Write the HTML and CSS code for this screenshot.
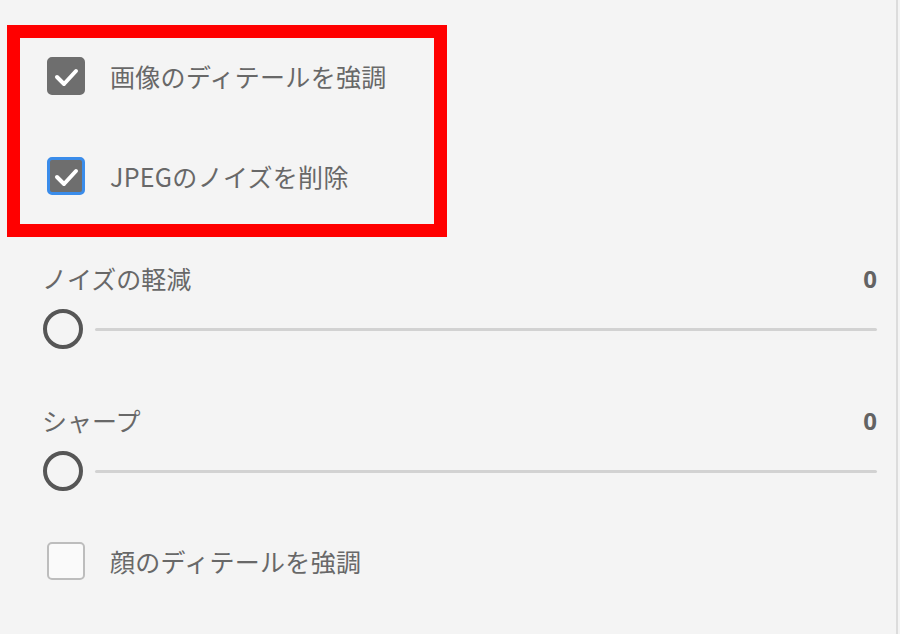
FILE: index.html
```html
<!DOCTYPE html>
<html lang="ja">
<head>
    <meta charset="UTF-8">
    <title>ディテール設定</title>
    <link rel="stylesheet" href="styles.css">
</head>
<body>
    <div class="panel">
        <div class="highlight">
            <label class="check-row">
                <span class="box checked">
                    <svg viewBox="0 0 38 38" width="38" height="38"><path d="M10 20 L17 27 L29 14" fill="none" stroke="#fff" stroke-width="4" stroke-linecap="round" stroke-linejoin="round"/></svg>
                </span>
                <span class="check-text">画像のディテールを強調</span>
            </label>
            <label class="check-row">
                <span class="box checked focused">
                    <svg viewBox="0 0 38 38" width="38" height="38"><path d="M10 20 L17 27 L29 14" fill="none" stroke="#fff" stroke-width="4" stroke-linecap="round" stroke-linejoin="round"/></svg>
                </span>
                <span class="check-text">JPEGのノイズを削除</span>
            </label>
        </div>

        <div class="sliders">
            <div class="slider-group">
                <div class="slider-head">
                    <span class="slider-label">ノイズの軽減</span>
                    <span class="slider-value">0</span>
                </div>
                <div class="slider">
                    <span class="thumb"></span>
                    <span class="track"></span>
                </div>
            </div>
            <div class="slider-group">
                <div class="slider-head">
                    <span class="slider-label">シャープ</span>
                    <span class="slider-value">0</span>
                </div>
                <div class="slider">
                    <span class="thumb"></span>
                    <span class="track"></span>
                </div>
            </div>
        </div>

        <label class="check-row plain">
            <span class="box"></span>
            <span class="check-text">顔のディテールを強調</span>
        </label>
    </div>
</body>
</html>
```

FILE: styles.css
```css
body { margin: 0; background: #f4f4f4; font-family: "Noto Sans CJK JP", "Noto Sans", sans-serif; color: #686868; }
.panel { width: 898px; height: 634px; box-sizing: border-box; padding-top: 25px; border-right: 2px solid #dcdcdc; }

.highlight { margin-left: 7px; width: 440px; height: 212px; box-sizing: border-box; border: 13px solid #ff0000; padding: 19px 0 0 27px; display: flex; flex-direction: column; gap: 62px; }

.check-row { display: flex; align-items: center; gap: 25px; height: 38px; }
.check-row.plain { margin: 51px 0 0 47px; }
.box { width: 38px; height: 38px; box-sizing: border-box; border-radius: 5px; border: 2px solid #bdbdbd; background: #fafafa; flex: none; display: block; }
.box svg { display: block; margin: -2px; }
.box.checked { background: #6e6e6e; border-color: #6e6e6e; }
.box.focused { border: 3px solid #3a8cea; }
.box.focused svg { margin: -3px; }
.check-text { font-size: 25px; line-height: 36px; letter-spacing: 0.3px; }

.sliders { margin: 23px 0 0 42px; width: 835px; display: flex; flex-direction: column; gap: 53px; }
.slider-group { display: flex; flex-direction: column; gap: 13px; }
.slider-head { display: flex; justify-content: space-between; align-items: center; height: 36px; }
.slider-label { font-size: 25px; line-height: 36px; }
.slider-value { font-size: 24px; font-weight: bold; color: #636363; font-family: "Open Sans", sans-serif; }
.slider { display: flex; align-items: center; gap: 12px; height: 40px; }
.thumb { width: 40px; height: 40px; box-sizing: border-box; border: 4px solid #565656; border-radius: 50%; flex: none; margin-left: 1px; }
.track { flex: 1; height: 3px; background: #d2d2d2; border-radius: 2px; }
```
